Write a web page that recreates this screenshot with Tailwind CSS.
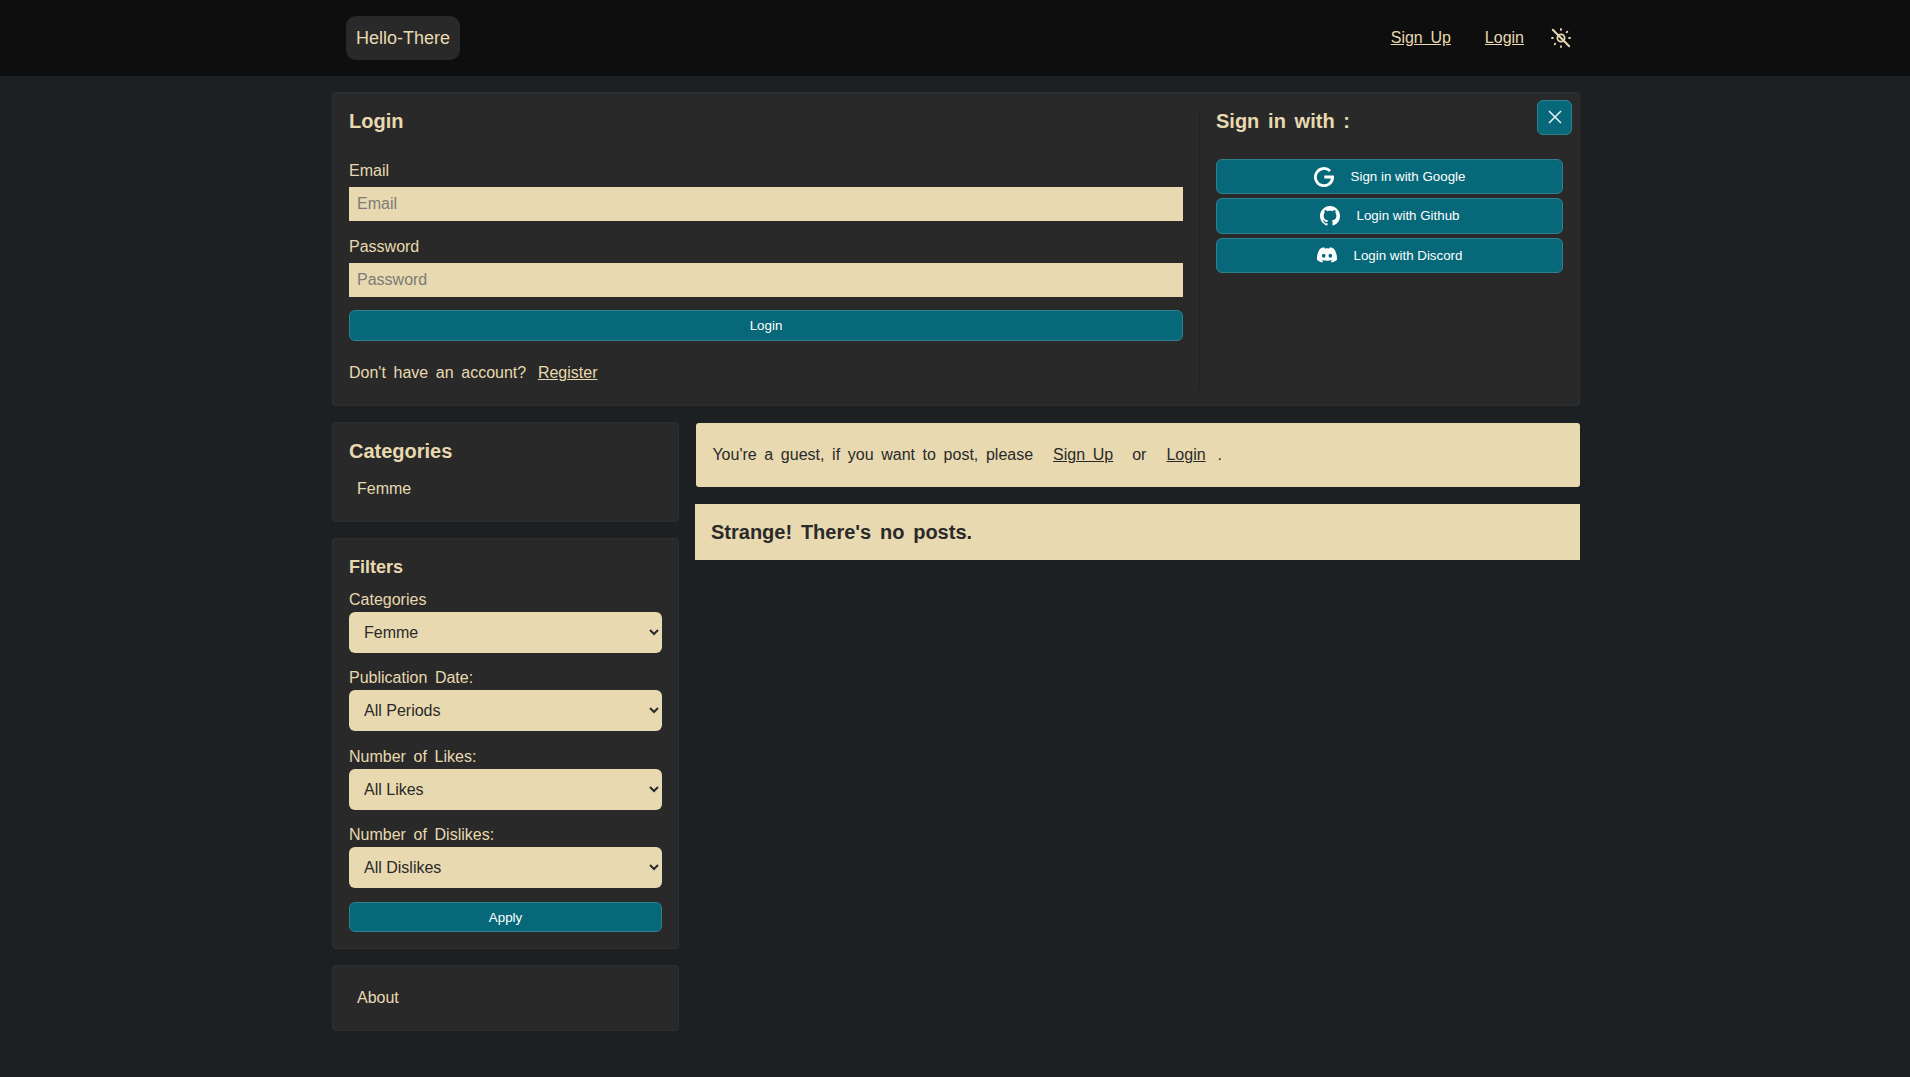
<!DOCTYPE html>
<html lang="en">
<head>
  <meta charset="UTF-8" />
  <meta name="viewport" content="width=device-width, initial-scale=1.0" />
  <title>Hello-There</title>
  <script src="https://cdn.jsdelivr.net/npm/@tailwindcss/browser@4"></script>
</head>
<body class="min-h-screen bg-[#1c2022] font-['Liberation_Sans',Arial,sans-serif] text-base text-[#e8d9b0] [word-spacing:3.2px]">
  <!-- top nav -->
  <header class="h-[76px] bg-[#0e0e0e]">
    <div class="w-[1248px] ml-[332px] h-full flex items-center pl-[14px] pr-[9px]">
      <a href="#" class="h-[44px] flex items-center px-[10px] rounded-[10px] bg-[#292929] text-[18px] [word-spacing:0]">Hello-There</a>
      <nav class="ml-auto flex items-center">
        <a href="#" class="underline">Sign Up</a>
        <a href="#" class="underline ml-[34px]">Login</a>
        <svg class="ml-[27px] w-[20px] h-[20px]" viewBox="0 0 20 20" fill="none" stroke="#e8d9b0" stroke-width="1.8" stroke-linecap="round">
          <circle cx="10" cy="10" r="3.6" />
          <path d="M1.8 1.8 18.2 18.2" stroke-width="2" />
          <path d="M10 1v.9M10 18.1v.9M1 10h.9M18.1 10h.9M3.7 16.3l.6-.6M15.7 4.3l.6-.6" />
        </svg>
      </nav>
    </div>
  </header>

  <main class="w-[1248px] ml-[332px] pt-[16px]">
    <!-- login panel -->
    <section class="relative flex h-[314px] p-[16px] bg-[#292929] border border-[#303030] rounded-[4px]">
      <button class="absolute top-[7px] right-[7px] w-[35px] h-[35px] flex items-center justify-center bg-[#07687a] border border-[#2f8190] rounded-[6px]">
        <svg class="w-[14px] h-[14px] mb-[1px]" viewBox="0 0 14 14" fill="none" stroke="#e9f3f4" stroke-width="1.5"><path d="M1 1 13 13M13 1 1 13" /></svg>
      </button>

      <div class="w-[851px] pr-[16px] border-r border-[#222222]">
        <h2 class="text-[20px] leading-[24px] font-bold mb-[26px]">Login</h2>
        <label class="block leading-[24px] mb-[4px]">Email</label>
        <input type="text" placeholder="Email" class="block w-full h-[34px] px-[8px] bg-[#e8d9b0] text-[#2a2a2a] placeholder:text-[#7c7b75] outline-none mb-[14px]" />
        <label class="block leading-[24px] mb-[4px]">Password</label>
        <input type="password" placeholder="Password" class="block w-full h-[34px] px-[8px] bg-[#e8d9b0] text-[#2a2a2a] placeholder:text-[#7c7b75] outline-none mb-[13px]" />
        <button class="block w-full h-[31px] bg-[#07687a] border border-[#2f8190] rounded-[6px] text-[13.33px] text-white">Login</button>
        <p class="mt-[20px] leading-[24px]">Don't have an account? <a href="#" class="underline ml-[4px]">Register</a></p>
      </div>

      <div class="flex-1 pl-[16px]">
        <h2 class="text-[20px] leading-[24px] font-bold mb-[26px]">Sign in with :</h2>
        <div class="flex flex-col gap-[4px]">
          <button class="h-[35px] flex items-center justify-center bg-[#07687a] border border-[#2f8190] rounded-[6px] text-[13.33px] text-white [word-spacing:0]">
            <svg class="w-[20px] h-[20px] mr-[17px]" viewBox="0 0 20 20" fill="none" stroke="#ffffff" stroke-width="2.8"><path d="M16 3.9A8.6 8.6 0 1 0 18.6 10H10.3" /></svg>
            Sign in with Google
          </button>
          <button class="h-[36px] flex items-center justify-center bg-[#07687a] border border-[#2f8190] rounded-[6px] text-[13.33px] text-white [word-spacing:0]">
            <svg class="w-[20px] h-[20px] mr-[17px]" viewBox="0 0 16 16" fill="#ffffff"><path d="M8 0C3.58 0 0 3.58 0 8c0 3.54 2.29 6.53 5.47 7.59.4.07.55-.17.55-.38 0-.19-.01-.82-.01-1.49-2.01.37-2.53-.49-2.69-.94-.09-.23-.48-.94-.82-1.13-.28-.15-.68-.52-.01-.53.63-.01 1.08.58 1.23.82.72 1.21 1.87.87 2.33.66.07-.52.28-.87.51-1.07-1.78-.2-3.64-.89-3.64-3.95 0-.87.31-1.59.82-2.15-.08-.2-.36-1.02.08-2.12 0 0 .67-.21 2.2.82.64-.18 1.32-.27 2-.27.68 0 1.36.09 2 .27 1.53-1.04 2.2-.82 2.2-.82.44 1.1.16 1.92.08 2.12.51.56.82 1.27.82 2.15 0 3.07-1.87 3.75-3.65 3.95.29.25.54.73.54 1.48 0 1.07-.01 1.93-.01 2.2 0 .21.15.46.55.38A8.013 8.013 0 0016 8c0-4.42-3.58-8-8-8z" /></svg>
            Login with Github
          </button>
          <button class="h-[35px] flex items-center justify-center bg-[#07687a] border border-[#2f8190] rounded-[6px] text-[13.33px] text-white [word-spacing:0]">
            <svg class="w-[20px] h-[20px] mr-[17px] mb-[1px]" viewBox="0 0 16 16" fill="#ffffff"><path d="M13.545 2.907a13.227 13.227 0 0 0-3.257-1.011.05.05 0 0 0-.052.025c-.141.25-.297.577-.406.833a12.19 12.19 0 0 0-3.658 0 8.258 8.258 0 0 0-.412-.833.051.051 0 0 0-.052-.025c-1.125.194-2.22.534-3.257 1.011a.041.041 0 0 0-.021.018C.356 6.024-.213 9.047.066 12.032c.001.014.01.028.021.037a13.276 13.276 0 0 0 3.995 2.02.05.05 0 0 0 .056-.019c.308-.42.582-.863.818-1.329a.05.05 0 0 0-.01-.059.051.051 0 0 0-.018-.011 8.875 8.875 0 0 1-1.248-.595.05.05 0 0 1-.02-.066.051.051 0 0 1 .015-.019c.084-.063.168-.129.248-.195a.05.05 0 0 1 .051-.007c2.619 1.196 5.454 1.196 8.041 0a.052.052 0 0 1 .053.007c.08.066.164.132.248.195a.051.051 0 0 1-.004.085 8.254 8.254 0 0 1-1.249.594.05.05 0 0 0-.03.03.052.052 0 0 0 .003.041c.24.465.515.909.817 1.329a.05.05 0 0 0 .056.019 13.235 13.235 0 0 0 4.001-2.02.049.049 0 0 0 .021-.037c.334-3.451-.559-6.449-2.366-9.106a.034.034 0 0 0-.02-.019Zm-8.198 7.307c-.789 0-1.438-.724-1.438-1.612 0-.889.637-1.613 1.438-1.613.807 0 1.45.73 1.438 1.613 0 .888-.637 1.612-1.438 1.612Zm5.316 0c-.788 0-1.438-.724-1.438-1.612 0-.889.637-1.613 1.438-1.613.807 0 1.451.73 1.438 1.613 0 .888-.631 1.612-1.438 1.612Z" /></svg>
            Login with Discord
          </button>
        </div>
      </div>
    </section>

    <div class="flex gap-[16px] mt-[16px] items-start">
      <!-- sidebar -->
      <aside class="w-[347px] flex flex-col gap-[16px]">
        <section class="h-[100px] px-[16px] pt-[16px] bg-[#292929] border border-[#303030] rounded-[4px]">
          <h2 class="text-[20px] leading-[24px] font-bold">Categories</h2>
          <a href="#" class="block ml-[8px] mt-[14px] leading-[24px]">Femme</a>
        </section>

        <section class="px-[16px] pt-[16px] pb-[16px] bg-[#292929] border border-[#303030] rounded-[4px]">
          <h3 class="text-[18px] leading-[24px] font-bold mb-[9px]">Filters</h3>
          <label class="block leading-[24px]">Categories</label>
          <select class="block w-full h-[41px] pl-[11px] mb-[13px] bg-[#e8d9b0] text-[#2a2a2a] rounded-[6px]"><option>Femme</option></select>
          <label class="block leading-[24px]">Publication Date:</label>
          <select class="block w-full h-[41px] pl-[11px] mb-[14px] bg-[#e8d9b0] text-[#2a2a2a] rounded-[6px]"><option>All Periods</option></select>
          <label class="block leading-[24px]">Number of Likes:</label>
          <select class="block w-full h-[41px] pl-[11px] mb-[13px] bg-[#e8d9b0] text-[#2a2a2a] rounded-[6px]"><option>All Likes</option></select>
          <label class="block leading-[24px]">Number of Dislikes:</label>
          <select class="block w-full h-[41px] pl-[11px] mb-[14px] bg-[#e8d9b0] text-[#2a2a2a] rounded-[6px]"><option>All Dislikes</option></select>
          <button class="block w-full h-[30px] pt-[1px] bg-[#07687a] border border-[#2f8190] rounded-[6px] text-[13.33px] text-white">Apply</button>
        </section>

        <section class="h-[66px] flex items-center px-[24px] bg-[#292929] border border-[#303030] rounded-[4px]">
          <a href="#">About</a>
        </section>
      </aside>

      <!-- feed -->
      <div class="flex-1 min-w-0">
        <div class="h-[64px] flex items-center pl-[16.4px] ml-[1px] mt-[1px] bg-[#e8d9b0] text-[#2a2a2a] rounded-[3px]">
          <span>You're a guest, if you want to post, please</span>
          <a href="#" class="underline ml-[20px] mr-[19px]">Sign Up</a>
          <span>or</span>
          <a href="#" class="underline ml-[20px] mr-[12px]">Login</a>
          <span>.</span>
        </div>
        <div class="h-[56px] flex items-center px-[16px] mt-[17px] bg-[#e8d9b0] text-[#2a2a2a] text-[20px] font-bold">Strange! There's no posts.</div>
      </div>
    </div>
  </main>
</body>
</html>
